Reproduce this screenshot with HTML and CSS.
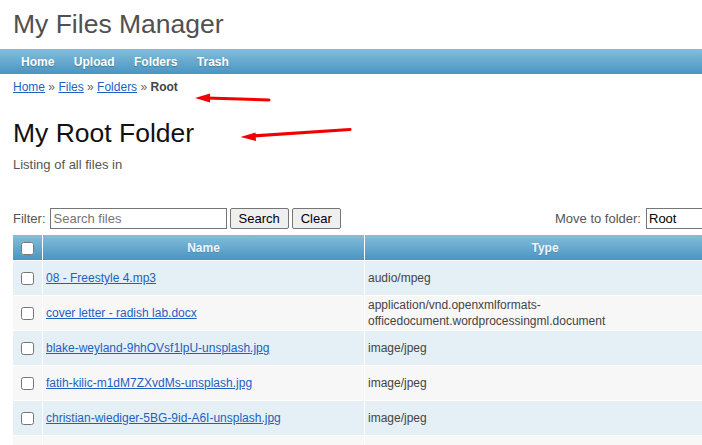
FILE: index.html
```html
<!DOCTYPE html>
<html lang="en">
<head>
<meta charset="utf-8">
<title>My Files Manager</title>
<link rel="stylesheet" href="styles.css">
</head>
<body>
<h1 class="site-title">My Files Manager</h1>
<nav class="main-nav">
  <a href="#">Home</a>
  <a href="#">Upload</a>
  <a href="#">Folders</a>
  <a href="#">Trash</a>
</nav>
<main class="page">
  <div class="breadcrumb">
    <a href="#">Home</a> <span class="sep">»</span> <a href="#">Files</a> <span class="sep">»</span> <a href="#">Folders</a> <span class="sep">»</span> <strong>Root</strong>
  </div>
  <h2 class="folder-title">My Root Folder</h2>
  <p class="intro">Listing of all files in</p>
  <div class="toolbar">
    <div class="filter">
      <label for="q">Filter:</label>
      <input id="q" class="search-input" type="text" placeholder="Search files">
      <button class="btn" type="button">Search</button>
      <button class="btn" type="button">Clear</button>
    </div>
    <div class="move">
      <label for="dest">Move to folder:</label>
      <select id="dest" class="folder-select"><option>Root</option></select>
    </div>
  </div>
  <table class="files">
    <colgroup><col class="c-check"><col class="c-name"><col class="c-type"></colgroup>
    <thead>
      <tr><th><input type="checkbox"></th><th>Name</th><th>Type</th></tr>
    </thead>
    <tbody>
      <tr><td class="chk"><input type="checkbox"></td><td><a href="#">08 - Freestyle 4.mp3</a></td><td>audio/mpeg</td></tr>
      <tr><td class="chk"><input type="checkbox"></td><td><a href="#">cover letter - radish lab.docx</a></td><td>application/vnd.openxmlformats-officedocument.wordprocessingml.document</td></tr>
      <tr><td class="chk"><input type="checkbox"></td><td><a href="#">blake-weyland-9hhOVsf1lpU-unsplash.jpg</a></td><td>image/jpeg</td></tr>
      <tr><td class="chk"><input type="checkbox"></td><td><a href="#">fatih-kilic-m1dM7ZXvdMs-unsplash.jpg</a></td><td>image/jpeg</td></tr>
      <tr><td class="chk"><input type="checkbox"></td><td><a href="#">christian-wiediger-5BG-9id-A6I-unsplash.jpg</a></td><td>image/jpeg</td></tr>
      <tr><td class="chk"><input type="checkbox"></td><td></td><td></td></tr>
    </tbody>
  </table>
</main>
<svg class="annotations" width="702" height="445" viewBox="0 0 702 445" aria-hidden="true">
  <path d="M269 100 L206 98" stroke="#f20000" stroke-width="3" stroke-linecap="round" fill="none"/>
  <path d="M195 98 L210 93.5 L210 102.5 Z" fill="#f20000"/>
  <path d="M350 129.5 L252 136" stroke="#f20000" stroke-width="3.2" stroke-linecap="round" fill="none"/>
  <path d="M240.5 137 L255.5 132.5 L256 141 Z" fill="#f20000"/>
</svg>
</body>
</html>
```
FILE: styles.css
```css
html {
  overflow: hidden;
}
body {
  margin: 0;
  font-family: "Liberation Sans", Arial, sans-serif;
  font-size: 12px;
  color: #444;
  background: #fff;
  position: relative;
}
.site-title {
  margin: 0;
  padding: 8px 13px 0;
  font-size: 26.5px;
  line-height: 32px;
  font-weight: normal;
  color: #505050;
}
.main-nav {
  margin-top: 9px;
  height: 24px;
  padding-top: 1px;
  display: flex;
  gap: 19.5px;
  padding-left: 21px;
  background: linear-gradient(to bottom, #84bedb, #4995c3);
}
.main-nav a {
  color: #fff;
  font-weight: bold;
  font-size: 12px;
  line-height: 25px;
  text-decoration: none;
  text-shadow: 0 1px 1px rgba(0, 0, 0, 0.25);
}
.page {
  padding-left: 13px;
  width: 713px;
}
.breadcrumb {
  margin-top: 6px;
  line-height: 14px;
  font-size: 12px;
  color: #444;
}
.breadcrumb a {
  color: #1f5fbf;
}
.breadcrumb .sep {
  color: #666;
}
.breadcrumb strong {
  color: #444;
}
.folder-title {
  margin: 23px 0 0;
  font-size: 26.5px;
  line-height: 32px;
  font-weight: normal;
  color: #111;
}
.intro {
  margin: 8px 0 0;
  font-size: 13px;
  line-height: 15px;
  color: #555;
}
.toolbar {
  margin-top: 36px;
  display: flex;
  justify-content: space-between;
  align-items: center;
  font-size: 13px;
  color: #555;
}
.filter,
.move {
  display: flex;
  align-items: center;
}
.filter label {
  margin-right: 4px;
}
.move label {
  margin-right: 5px;
}
.search-input {
  width: 177px;
  height: 21px;
  box-sizing: border-box;
  margin: 0 3px 0 0;
  padding: 1px 3px;
  border: 1px solid #767676;
  border-radius: 0;
  font-family: "Liberation Sans", Arial, sans-serif;
  font-size: 13px;
  color: #111;
}
.search-input::placeholder {
  color: #757575;
}
.btn {
  height: 21px;
  box-sizing: border-box;
  margin: 0 3px 0 0;
  padding: 0 8px;
  border: 1px solid #767676;
  border-radius: 2px;
  background: #efefef;
  font-family: "Liberation Sans", Arial, sans-serif;
  font-size: 13px;
  color: #000;
}
.folder-select {
  width: 80px;
  height: 21px;
  box-sizing: border-box;
  margin: 0;
  padding: 0 2px;
  border: 1px solid #767676;
  border-radius: 0;
  background: #fff;
  font-family: "Liberation Sans", Arial, sans-serif;
  font-size: 13px;
  color: #000;
  appearance: none;
}
.files {
  margin-top: 5px;
  margin-left: -1px;
  border-collapse: separate;
  border-spacing: 1px;
  table-layout: fixed;
  width: 714px;
  font-size: 12px;
}
.c-check { width: 29px; }
.c-name { width: 321px; }
.c-type { width: 360px; }
.files th {
  height: 25px;
  padding: 0;
  background: linear-gradient(to bottom, #84bedb, #4995c3);
  color: #eef5fb;
  font-weight: bold;
  text-align: center;
  vertical-align: middle;
  text-shadow: 0 1px 1px rgba(0, 0, 0, 0.15);
}
.files td {
  height: 34px;
  padding: 0 3px;
  line-height: 16px;
  vertical-align: middle;
  color: #444;
}
.files tbody tr:nth-child(odd) td {
  background: #e4f0f6;
}
.files tbody tr:nth-child(even) td {
  background: #f7f7f7;
}
.files td.chk {
  padding: 0;
  text-align: center;
}
.files input[type="checkbox"] {
  margin: 0;
  width: 13px;
  height: 13px;
  vertical-align: middle;
}
.files a {
  color: #1f5fbf;
}
.annotations {
  position: absolute;
  top: 0;
  left: 0;
  pointer-events: none;
}
```
